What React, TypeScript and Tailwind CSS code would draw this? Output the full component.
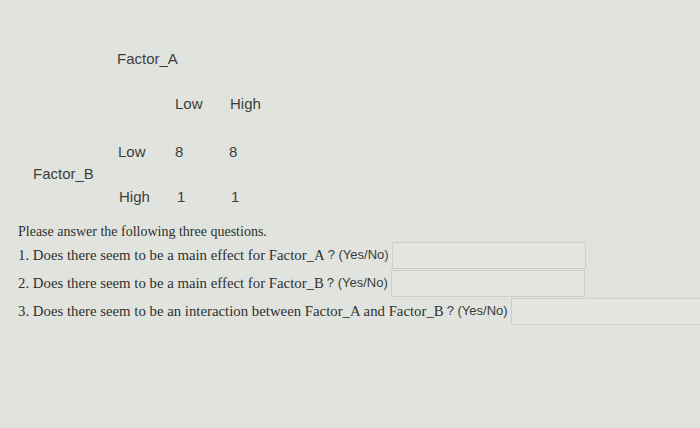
import React from 'react';

const sans = { fontFamily: '"Liberation Sans", Arial, sans-serif' };
const serif = { fontFamily: '"Liberation Serif", "Times New Roman", serif' };

function Question({ num, text, inputClass }: { num: number; text: string; inputClass: string }) {
  return (
    <div className="flex h-[28px] items-center whitespace-nowrap">
      <span className="text-[14.8px] text-[#2f302e]" style={serif}>
        {num}. {text}
      </span>
      <span className="ml-[3px] text-[13px] text-[#3a3b39]" style={sans}>
        ? (Yes/No)
      </span>
      <input
        type="text"
        className={`ml-[3px] h-[27px] shrink-0 border border-[#cdd0ca] bg-[#e4e7e1] outline-none ${inputClass}`}
      />
    </div>
  );
}

export default function App() {
  return (
    <div className="h-[428px] w-[700px] overflow-hidden bg-[#e1e4de] text-[#3d3e3c]">
      <div className="pt-[50px] text-[15px] leading-[18px]" style={sans}>
        <div className="ml-[117px]">Factor_A</div>

        <div className="ml-[175px] mt-[27px] flex">
          <span className="w-[55px]">Low</span>
          <span>High</span>
        </div>

        <div className="ml-[118px] mt-[30px] flex">
          <span className="w-[57px]">Low</span>
          <span className="w-[54px]">8</span>
          <span>8</span>
        </div>

        <div className="ml-[33px] mt-[4px]">Factor_B</div>

        <div className="ml-[119px] mt-[5px] flex">
          <span className="w-[56px]">High</span>
          <span className="w-[54px] pl-[2px]">1</span>
          <span className="pl-[2px]">1</span>
        </div>
      </div>

      <div className="mt-[17px] pl-[18px]">
        <div className="h-[18px] text-[14px] leading-[18px] text-[#2f302e]" style={serif}>
          Please answer the following three questions.
        </div>
        <Question num={1} text="Does there seem to be a main effect for Factor_A" inputClass="w-[194px]" />
        <Question num={2} text="Does there seem to be a main effect for Factor_B" inputClass="w-[194px]" />
        <Question
          num={3}
          text="Does there seem to be an interaction between Factor_A and Factor_B"
          inputClass="w-[194px]"
        />
      </div>
    </div>
  );
}
